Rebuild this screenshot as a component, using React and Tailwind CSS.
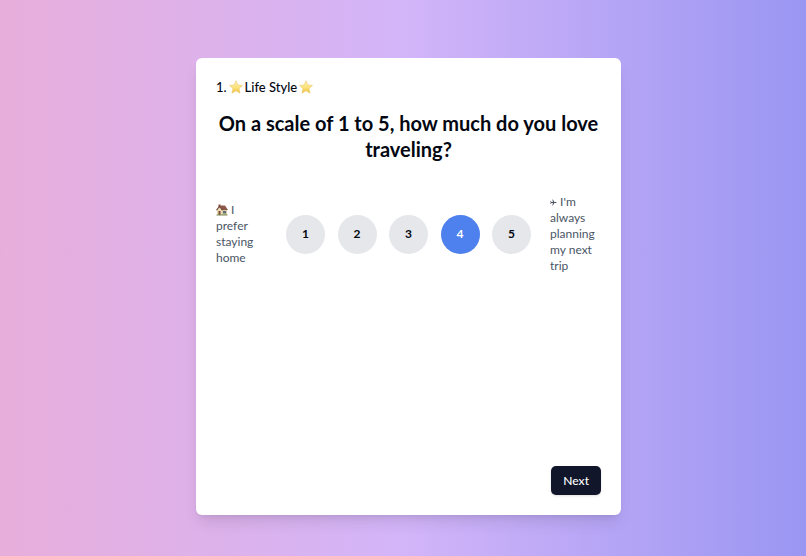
import { useState } from 'react';

const SCALE = [1, 2, 3, 4, 5];

function StarIcon() {
  return (
    <svg viewBox="0 0 24 24" className="size-[14px] flex-shrink-0" aria-hidden="true">
      <defs>
        <linearGradient id="star-fill" x1="0" y1="0" x2="0" y2="1">
          <stop offset="0" stopColor="#fff3b8" />
          <stop offset="0.55" stopColor="#fbe27a" />
          <stop offset="1" stopColor="#edbf3c" />
        </linearGradient>
      </defs>
      <path
        d="M12 1.2l3.2 7.3 7.9.8-5.9 5.3 1.7 7.9-6.9-4-6.9 4 1.7-7.9L.9 9.3l7.9-.8z"
        fill="url(#star-fill)"
        stroke="#ecc768"
        strokeWidth="1"
        strokeLinejoin="round"
      />
    </svg>
  );
}

function HouseIcon() {
  return (
    <svg viewBox="0 0 24 24" className="inline-block size-[12px] align-[-2px]" aria-hidden="true">
      <path d="M2 11h20v11H2z" fill="#d8c8a0" />
      <path d="M2 12l5-7 6 7v10H2z" fill="#eadbb8" />
      <path d="M5 1h4v6H5z" fill="#8a4b3a" />
      <path d="M7 3h11l6 9H12z" fill="#8b5a4a" />
      <path d="M7 3L0 12l2 1 5-7 5 7 2-1z" fill="#6d4034" />
      <path d="M5 14h4v8H5z" fill="#7a4a35" />
      <path d="M14 14h6v5h-6z" fill="#60727c" />
      <path d="M1 21h22v2H1z" fill="#75864f" />
    </svg>
  );
}

function PlaneIcon() {
  return (
    <svg viewBox="0 0 24 24" className="inline-block size-[7px]" aria-hidden="true">
      <path
        d="M23 12c0-1.200-1.500-2-3-2h-5L10 2H8l2 8H5L3 7H1l1.500 5L1 17h2l2-3h5l-2 8h2l5-8h5c1.500 0 3-.8 3-2z"
        fill="#4b5563"
      />
    </svg>
  );
}

export default function App() {
  const [rating, setRating] = useState(4);

  return (
    <main className="min-h-screen flex items-center justify-center pt-[17px] pl-[11px] bg-linear-to-r/srgb from-[#e8aedb] via-[#d3b5f9] to-[#9a96f2] font-['Lato',sans-serif] text-gray-950">
      <section className="w-full max-w-[425px] min-h-[457px] flex flex-col bg-white rounded-md shadow-lg p-5">
        <div className="flex items-center gap-[2px] text-[13px] leading-[18px] font-medium">
          <span>1.</span>
          <StarIcon />
          <span>Life Style</span>
          <StarIcon />
        </div>

        <h1 className="mt-[14px] text-[20px] leading-[26px] font-bold text-center">
          On a scale of 1 to 5, how much do you love traveling?
        </h1>

        <div className="mt-8 grid grid-cols-[1fr_auto_1fr] items-center gap-[19px] text-[12px] leading-4 text-gray-600">
          <span>
            <HouseIcon /> I prefer staying home
          </span>
          <div className="w-[245px] flex justify-between">
            {SCALE.map((value) => (
              <button
                key={value}
                type="button"
                aria-pressed={rating === value}
                onClick={() => setRating(value)}
                className={`size-[39px] rounded-full text-[12px] font-bold ${
                  rating === value ? 'bg-[#4e80ee] text-white' : 'bg-gray-200 text-gray-950'
                }`}
              >
                {value}
              </button>
            ))}
          </div>
          <span>
            <PlaneIcon /> I'm always planning my next trip
          </span>
        </div>

        <button
          type="button"
          className="mt-auto self-end h-[29px] px-3 rounded-[5px] bg-[#11162a] text-white text-[12px] leading-4 font-medium shadow-sm"
        >
          Next
        </button>
      </section>
    </main>
  );
}
